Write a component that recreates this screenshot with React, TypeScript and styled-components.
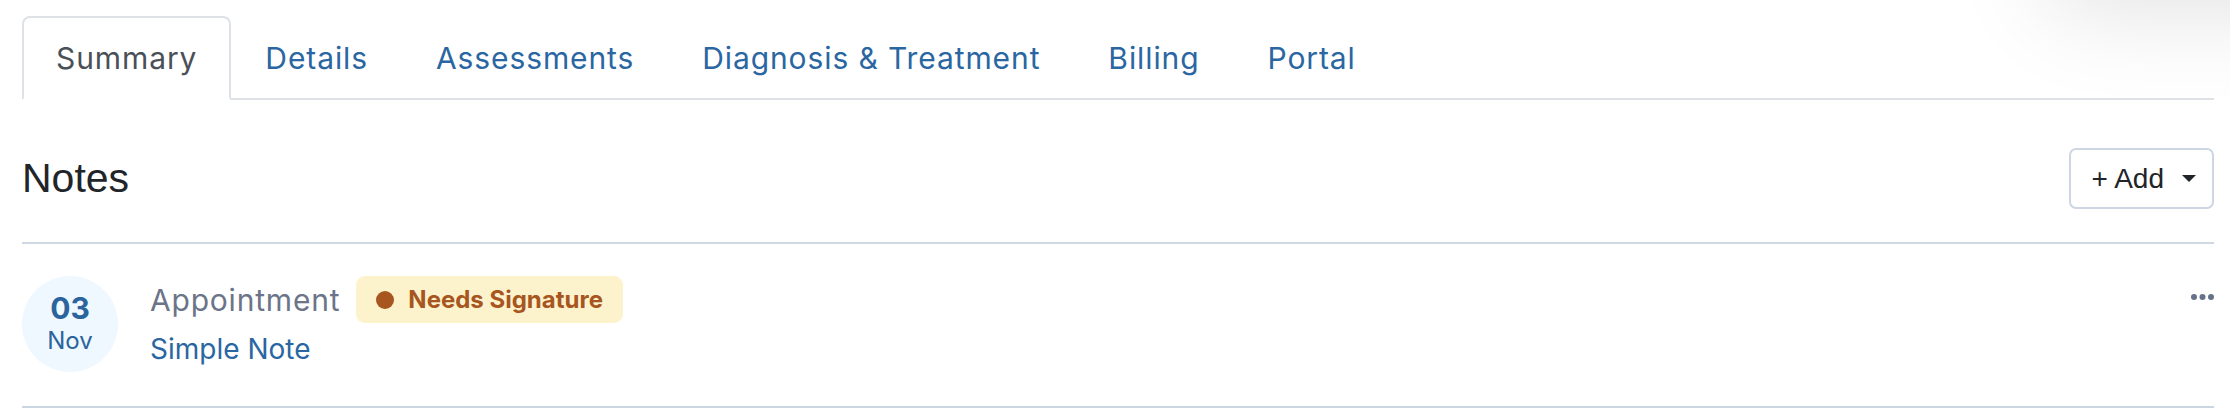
import React from "react";
import styled, { createGlobalStyle } from "styled-components";

const GlobalStyle = createGlobalStyle`
  html, body { margin: 0; padding: 0; background: #ffffff; }
  body { font-family: Inter, "Noto Sans", sans-serif; }
  * { box-sizing: border-box; }
`;

const Page = styled.div`
  position: relative;
  height: 408px;
  overflow: hidden;
  padding: 16px 16px 0 22px;
`;

const TopShadow = styled.div`
  position: absolute;
  top: -200px;
  left: 2050px;
  width: 360px;
  height: 200px;
  border-radius: 12px;
  background: #fff;
  box-shadow: 0 8px 100px rgba(0, 0, 0, 0.12);
`;

const TabList = styled.ul`
  display: flex;
  margin: 0;
  padding: 0;
  list-style: none;
  border-bottom: 2px solid #dee2e6;
`;

const Tab = styled.li<{ $active?: boolean }>`
  margin-bottom: -2px;
  padding: 0 32px;
  border: 2px solid transparent;
  border-radius: 8px 8px 0 0;
  font-size: 30px;
  letter-spacing: 0.9px;
  line-height: 80px;
  color: ${(p) => (p.$active ? "#495057" : "#2a66a1")};
  background: ${(p) => (p.$active ? "#ffffff" : "transparent")};
  border-color: ${(p) => (p.$active ? "#dee2e6 #dee2e6 #ffffff" : "transparent")};
  cursor: pointer;
  white-space: nowrap;
`;

const Header = styled.div`
  display: flex;
  align-items: center;
  justify-content: space-between;
  padding: 48px 0 33px;
  border-bottom: 2px solid #cfd8e3;
`;

const Title = styled.h2`
  margin: 0;
  font-family: "Liberation Sans", Arial, sans-serif;
  font-weight: 400;
  font-size: 41px;
  line-height: 1;
  color: #212529;
`;

const AddButton = styled.button`
  display: flex;
  align-items: center;
  height: 61px;
  padding: 0 16px 0 21px;
  border: 2px solid #cdd6e2;
  border-radius: 7px;
  background: #fff;
  font-family: "Liberation Sans", Arial, sans-serif;
  font-size: 28px;
  color: #212529;
  cursor: pointer;
`;

const Caret = styled.span`
  display: inline-block;
  margin-left: 18px;
  width: 0;
  height: 0;
  border-top: 7px solid #212529;
  border-left: 7.5px solid transparent;
  border-right: 7.5px solid transparent;
`;

const NoteRow = styled.div`
  display: flex;
  align-items: flex-start;
  padding: 32px 0 34px;
  border-bottom: 2px solid #cbd5e1;
`;

const DateBadge = styled.div`
  flex: none;
  width: 96px;
  height: 96px;
  border-radius: 50%;
  background: #eff7ff;
  display: flex;
  flex-direction: column;
  align-items: center;
  justify-content: center;
  color: #2b649c;
`;

const Day = styled.span`
  font-size: 30px;
  font-weight: 700;
  line-height: 32px;
`;

const Month = styled.span`
  margin-top: 2px;
  font-size: 24px;
  line-height: 30px;
`;

const NoteBody = styled.div`
  flex: 1;
  margin-left: 32px;
  display: flex;
  flex-direction: column;
`;

const NoteTop = styled.div`
  display: flex;
  align-items: center;
  height: 47px;
`;

const NoteType = styled.span`
  font-size: 30px;
  letter-spacing: 0.8px;
  color: #6b7488;
`;

const StatusPill = styled.span`
  display: inline-flex;
  align-items: center;
  height: 47px;
  margin-left: 16px;
  padding: 0 20px;
  border-radius: 9px;
  background: #fcf3cd;
  color: #a8561f;
  font-size: 24px;
  font-weight: 700;
`;

const Dot = styled.span`
  width: 18px;
  height: 18px;
  border-radius: 50%;
  background: #a8561f;
  margin-right: 14px;
`;

const NoteLink = styled.a`
  margin-top: 6px;
  font-size: 28px;
  line-height: 40px;
  color: #2a66a1;
  text-decoration: none;
`;

const MoreButton = styled.button`
  flex: none;
  display: flex;
  align-items: center;
  height: 42px;
  padding: 0;
  border: 0;
  background: none;
  cursor: pointer;
`;

const tabs = ["Summary", "Details", "Assessments", "Diagnosis & Treatment", "Billing", "Portal"];

export default function App() {
  return (
    <>
      <GlobalStyle />
      <Page>
        <TopShadow />
        <TabList>
          {tabs.map((t, i) => (
            <Tab key={t} $active={i === 0}>
              {t}
            </Tab>
          ))}
        </TabList>
        <Header>
          <Title>Notes</Title>
          <AddButton>
            + Add
            <Caret />
          </AddButton>
        </Header>
        <NoteRow>
          <DateBadge>
            <Day>03</Day>
            <Month>Nov</Month>
          </DateBadge>
          <NoteBody>
            <NoteTop>
              <NoteType>Appointment</NoteType>
              <StatusPill>
                <Dot />
                Needs Signature
              </StatusPill>
            </NoteTop>
            <NoteLink href="#">Simple Note</NoteLink>
          </NoteBody>
          <MoreButton aria-label="More">
            <svg width="23" height="6" viewBox="0 0 23 6">
              <circle cx="3" cy="3" r="3" fill="#66718a" />
              <circle cx="11.5" cy="3" r="3" fill="#66718a" />
              <circle cx="20" cy="3" r="3" fill="#66718a" />
            </svg>
          </MoreButton>
        </NoteRow>
      </Page>
    </>
  );
}
